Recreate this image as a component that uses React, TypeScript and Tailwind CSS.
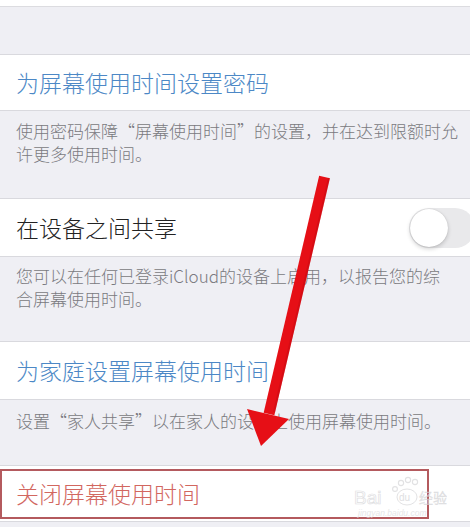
import React from "react";

const font = { fontFamily: '"Noto Sans CJK SC", "Noto Sans", sans-serif' };

function Row({ children, className = "" }: { children: React.ReactNode; className?: string }) {
  return (
    <div className={`flex items-center bg-white border-y border-[#d9d9de] px-4 ${className}`}>
      {children}
    </div>
  );
}

export default function App() {
  return (
    <div className="relative w-[470px] h-[527px] overflow-hidden bg-[#efeff4] font-light" style={font}>
      <div className="h-[7px] bg-white border-b border-[#dcdce0]" />
      <div className="h-[47px]" />
      <Row className="h-[57px]">
        <span className="text-[23px] leading-none text-[#4c88c6] whitespace-nowrap">为屏幕使用时间设置密码</span>
      </Row>
      <div className="h-[87px] pt-[8px] px-4 text-[17px] leading-[23px] text-[#7a7a80] whitespace-nowrap">
        使用密码保障“屏幕使用时间”的设置，并在达到限额时允
        <br />
        许更多使用时间。
      </div>
      <Row className="h-[59px]">
        <span className="text-[23px] leading-none text-[#222] whitespace-nowrap">在设备之间共享</span>
        <div className="ml-auto mr-[-21px] relative w-[66px] h-[40px] rounded-full bg-[#e9e9eb]">
          <div className="absolute left-[1px] top-[1px] w-[38px] h-[38px] rounded-full bg-white shadow-[0_2px_4px_rgba(0,0,0,0.18),0_0_1px_rgba(0,0,0,0.2)]" />
        </div>
      </Row>
      <div className="h-[84px] pt-[7px] px-4 text-[17px] leading-[23px] text-[#7a7a80] whitespace-nowrap">
        您可以在任何已登录iCloud的设备上启用，以报告您的综
        <br />
        合屏幕使用时间。
      </div>
      <Row className="h-[59px]">
        <span className="text-[23px] leading-none text-[#4c88c6] whitespace-nowrap">为家庭设置屏幕使用时间</span>
      </Row>
      <div className="h-[65px] pt-[10px] px-4 text-[17px] leading-[22px] text-[#7a7a80] whitespace-nowrap">
        设置“家人共享”以在家人的设备上使用屏幕使用时间。
      </div>
      <Row className="h-[57px]">
        <span className="text-[23px] leading-none text-[#d2675f] whitespace-nowrap">关闭屏幕使用时间</span>
      </Row>

      {/* red annotation box */}
      <div className="absolute left-0 top-[469px] w-[429px] h-[50px] border-2 border-[#b45a5e]" />

      {/* Baidu watermark */}
      <div className="absolute left-[352px] top-[474px] w-[95px] h-[45px] pointer-events-none opacity-70">
        <svg width="95" height="45" viewBox="0 0 95 45">
          <g fill="none" stroke="#d6d6d8" strokeWidth="1.1">
            <circle cx="49" cy="9" r="2.6" />
            <circle cx="56" cy="6" r="2.6" />
            <circle cx="63" cy="8" r="2.6" />
            <circle cx="43" cy="15" r="2.4" />
          </g>
          <text x="2" y="30" fontSize="19" fill="#ffffff" stroke="#d2d2d5" strokeWidth="0.7" fontFamily="Liberation Sans, sans-serif">Bai</text>
          <ellipse cx="55" cy="23" rx="10" ry="8" fill="#ffffff" stroke="#d2d2d5" strokeWidth="0.9" />
          <text x="47" y="27" fontSize="10" fill="#d2d2d5" fontFamily="Liberation Sans, sans-serif">du</text>
          <text x="67" y="29" fontSize="14" fill="#ffffff" stroke="#d2d2d5" strokeWidth="0.6" fontFamily="Noto Sans CJK SC, sans-serif">经验</text>
          <text x="6" y="42" fontSize="8.5" fontStyle="italic" fill="#dcdcde" fontFamily="Liberation Sans, sans-serif">jingyan.baidu.com</text>
        </svg>
      </div>

      {/* red arrow overlay */}
      <svg className="absolute left-0 top-0 pointer-events-none" width="470" height="527" viewBox="0 0 470 527">
        <line x1="324.5" y1="177" x2="269" y2="414" stroke="#e60f16" strokeWidth="11" strokeLinecap="butt" />
        <line x1="329" y1="178" x2="274" y2="412" stroke="#b80a10" strokeWidth="2" strokeOpacity="0.35" />
        <polygon points="247,409 289,419 261,446" fill="#e60f16" />
      </svg>
    </div>
  );
}
